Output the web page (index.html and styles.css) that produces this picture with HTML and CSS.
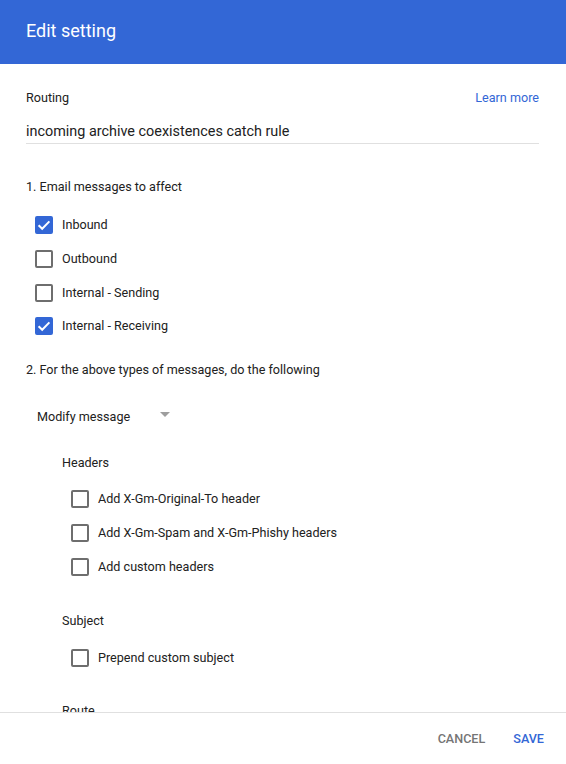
FILE: index.html
```html
<!DOCTYPE html>
<html>
<head>
<meta charset="utf-8">
<link rel="stylesheet" href="styles.css">
</head>
<body>
<div class="dialog">
  <header class="dialog-header">Edit setting</header>
  <main class="dialog-body">
    <div class="routing-row">
      <span class="label">Routing</span>
      <a class="link">Learn more</a>
    </div>
    <div class="text-input">incoming archive coexistences catch rule</div>

    <div class="section-title first">1. Email messages to affect</div>
    <div class="checks">
      <div class="check-row"><span class="cb checked"><svg viewBox="0 0 18 18" width="18" height="18"><path d="M3.6 9.2l3.6 3.6 7.2-7.4" fill="none" stroke="#fff" stroke-width="2"/></svg></span><span class="label">Inbound</span></div>
      <div class="check-row"><span class="cb"></span><span class="label">Outbound</span></div>
      <div class="check-row"><span class="cb"></span><span class="label">Internal - Sending</span></div>
      <div class="check-row"><span class="cb checked"><svg viewBox="0 0 18 18" width="18" height="18"><path d="M3.6 9.2l3.6 3.6 7.2-7.4" fill="none" stroke="#fff" stroke-width="2"/></svg></span><span class="label">Internal - Receiving</span></div>
    </div>

    <div class="section-title second">2. For the above types of messages, do the following</div>
    <div class="select">
      <span class="label">Modify message</span>
      <span class="arrow"></span>
    </div>

    <div class="group">
      <div class="group-title">Headers</div>
      <div class="checks nested headers">
        <div class="check-row"><span class="cb"></span><span class="label">Add X-Gm-Original-To header</span></div>
        <div class="check-row"><span class="cb"></span><span class="label">Add X-Gm-Spam and X-Gm-Phishy headers</span></div>
        <div class="check-row"><span class="cb"></span><span class="label">Add custom headers</span></div>
      </div>
      <div class="group-title subject">Subject</div>
      <div class="checks nested subjects">
        <div class="check-row"><span class="cb"></span><span class="label">Prepend custom subject</span></div>
      </div>
      <div class="group-title route">Route</div>
    </div>
  </main>
  <footer class="dialog-footer">
    <button class="btn cancel">CANCEL</button>
    <button class="btn save">SAVE</button>
  </footer>
</div>
</body>
</html>
```

FILE: styles.css
```css
* { box-sizing: border-box; }
html, body { margin: 0; padding: 0; }
body {
  font-family: Roboto, "Liberation Sans", Arial, sans-serif;
  color: #212121;
  background: #fff;
}
.dialog {
  width: 566px;
  height: 764px;
  display: flex;
  flex-direction: column;
  overflow: hidden;
}
.dialog-header {
  height: 64px;
  flex: 0 0 64px;
  background: #3367d6;
  color: #fff;
  font-size: 18px;
  padding: 0 26px 3px;
  display: flex;
  align-items: center;
}
.dialog-body {
  flex: 1 1 auto;
  overflow: hidden;
  padding: 24px 27px 0 26px;
}
.label { font-size: 12.6px; line-height: 20px; color: #212121; }
.routing-row {
  display: flex;
  justify-content: space-between;
  align-items: center;
  height: 20px;
}
.link { font-size: 12.6px; color: #3367d6; line-height: 20px; }
.text-input {
  margin-top: 14px;
  font-size: 14.4px;
  line-height: 20px;
  border-bottom: 1px solid #e0e0e0;
  padding-bottom: 1px;
}
.section-title { font-size: 12.6px; line-height: 20px; }
.section-title.first { margin-top: 33px; }
.section-title.second { margin-top: 18px; }
.checks { margin-top: 11px; padding-left: 9px; }
.check-row {
  height: 34px;
  display: flex;
  align-items: center;
  gap: 9px;
}
.checks:not(.nested) .check-row:nth-child(4) { height: 32px; }
.cb {
  width: 18px;
  height: 18px;
  border: 2px solid #6e6e6e;
  border-radius: 2px;
  flex: 0 0 18px;
  display: block;
  position: relative;
}
.cb.checked {
  background: #3367d6;
  border-color: #3367d6;
}
.cb svg { position: absolute; left: -2px; top: -2px; }
.select {
  margin-top: 27px;
  padding-left: 11px;
  display: flex;
  align-items: center;
  height: 20px;
}
.arrow {
  margin-left: 30px;
  margin-top: -6px;
  width: 0; height: 0;
  border-left: 5px solid transparent;
  border-right: 5px solid transparent;
  border-top: 5px solid #9e9e9e;
}
.group { padding-left: 36px; margin-top: 26px; }
.group-title { font-size: 12.6px; line-height: 20px; }
.group .nested { padding-left: 9px; }
.group .nested.headers { margin-top: 9px; }
.group .nested.subjects { margin-top: 10px; }
.group-title.subject { margin-top: 28px; }
.group-title.route { margin-top: 26px; }
.nested .check-row:nth-child(3) { height: 33px; }
.dialog-footer {
  flex: 0 0 52px;
  height: 52px;
  border-top: 1px solid #e0e0e0;
  display: flex;
  justify-content: flex-end;
  align-items: center;
  padding-right: 14px;
  gap: 12px;
}
.btn {
  font-family: Roboto, "Liberation Sans", Arial, sans-serif;
  font-size: 12.6px;
  font-weight: 500;
  background: none;
  border: none;
  padding: 0 8px;
  height: 36px;
  cursor: pointer;
}
.btn.cancel { color: #757575; }
.btn.save { color: #3367d6; }
```
